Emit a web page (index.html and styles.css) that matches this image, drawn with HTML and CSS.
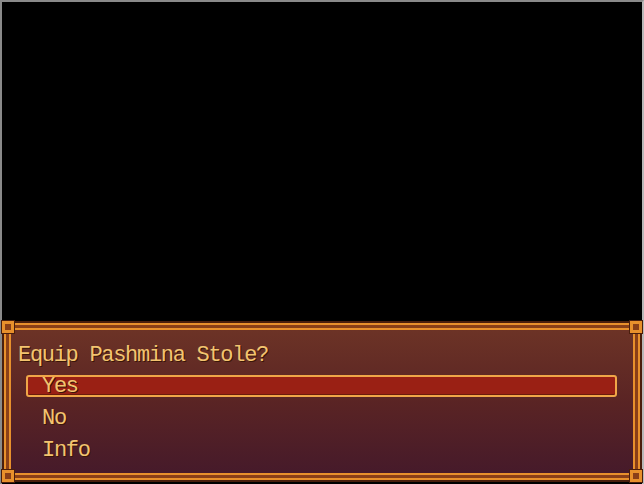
FILE: index.html
```html
<!DOCTYPE html>
<html lang="en">
<head>
  <meta charset="UTF-8" />
  <title>Equip</title>
  <link rel="stylesheet" href="styles.css">
</head>
<body>
  <div class="game">
    <div class="screen"></div>

    <div class="window">
      <div class="frame-outer">
        <div class="frame-mid">
          <div class="frame-inner">
            <div class="content">
              <div class="prompt">Equip Pashmina Stole?</div>
              <div class="choice"><div class="bar selected">Yes</div></div>
              <div class="choice"><div class="bar">No</div></div>
              <div class="choice"><div class="bar">Info</div></div>
            </div>
          </div>
        </div>
      </div>
      <!-- corner studs -->
      <span class="stud tl"></span>
      <span class="stud tr"></span>
      <span class="stud bl"></span>
      <span class="stud br"></span>
    </div>
  </div>
</body>
</html>
```

FILE: styles.css
```css
body {
  margin: 0;
  background: #000;
  font-family: 'Liberation Mono', 'DejaVu Sans Mono', monospace;
}

.game {
  width: 640px;
  height: 482px;
  border-top: 2px solid #8a8a8a;
  border-left: 2px solid #8a8a8a;
  border-right: 2px solid #b8b8b8;
  background: #000;
  display: flex;
  flex-direction: column;
}

.screen {
  height: 319px;
  background: #000;
}

.window {
  position: relative;
  height: 161px;
  background: #4a1e0c;
  padding: 2px;
  box-sizing: border-box;
}

.frame-outer {
  height: 100%;
  border: 2px solid #e8902c;
  box-sizing: border-box;
}

.frame-mid {
  height: 100%;
  border: 3px solid #8a3f18;
  box-sizing: border-box;
}

.frame-inner {
  height: 100%;
  border: 2px solid #e8902c;
  box-sizing: border-box;
}

.content {
  height: 100%;
  box-sizing: border-box;
  padding: 6px 16px 0 7px;
  background: linear-gradient(to bottom, #6c3326, #5a2424 50%, #461a2a);
  color: #f3c470;
  font-size: 22px;
  letter-spacing: -1.3px;
  text-shadow: 1px 1px 0 #3a1608;
}

.prompt {
  height: 32px;
  line-height: 39px;
  margin-bottom: 2px;
}

.choice {
  height: 32px;
  display: flex;
  align-items: center;
  margin-left: 8px;
}

.bar {
  flex: 1;
  height: 22px;
  line-height: 20px;
  padding-left: 14px;
  border: 2px solid transparent;
  border-radius: 3px;
  box-sizing: border-box;
}

.bar.selected {
  border-color: #f0a648;
  background: #9a2014;
  box-shadow: inset 0 -1px 0 #6a1a0c;
}

.stud {
  position: absolute;
  width: 12px;
  height: 12px;
  box-sizing: border-box;
  border: 3px solid #e8902c;
  background: #8a3f18;
  outline: 1px solid #4a1e0c;
}

.stud.tl { top: 0; left: 0; }
.stud.tr { top: 0; right: 0; }
.stud.bl { bottom: 0; left: 0; }
.stud.br { bottom: 0; right: 0; }
```
